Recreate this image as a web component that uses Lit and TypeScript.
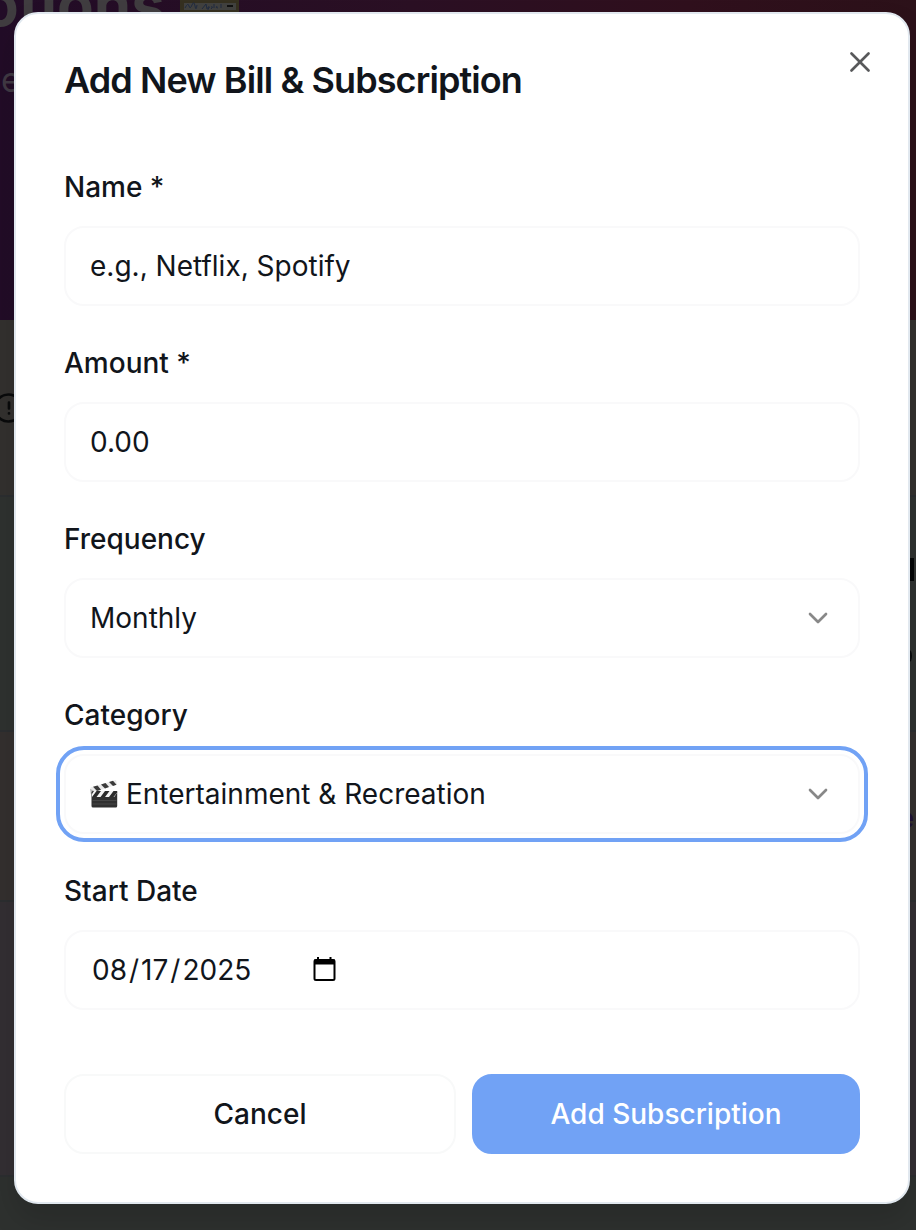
import { LitElement, html, css, svg } from "lit";
import { customElement } from "lit/decorators.js";

const chevron = html`<svg class="chevron" viewBox="0 0 24 24" width="32" height="32">
  ${svg`<path d="m6 9 6 6 6-6" fill="none" stroke="currentColor" stroke-width="2" stroke-linecap="round" stroke-linejoin="round"></path>`}
</svg>`;

const clapper = html`<svg class="clapper" viewBox="0 0 28 28" width="28" height="28">
  <path d="M.5 7.500 26 0l1 4.500L4 12z" fill="#e9e9e9"></path>
  <path d="M3 6.800 7.500 5.400l3.500 4.400-4 1.300zM11 4.400l4.500-1.300 3.500 4-4 1.300zM19 2l4-1.200 3.500 3.900-3.500 1.200z" fill="#3a3a3a"></path>
  <path d="M0 8.500 5 11.500 3 15 .8 14z" fill="#b5b5b5"></path>
  <rect x="1.500" y="11" width="25.700" height="16.500" rx="1.500" fill="#303030"></rect>
  <path d="M4 11h23.200v1.500l-3 4.500H2v-3z" fill="#f4f4f4"></path>
  <path d="M6.500 11H11l-4.500 6H2zM15 11h4.500L15 17h-4.500zM23.500 11h3.700v1.500L23.500 17H19z" fill="#2b2b2b"></path>
  <path d="M2.500 20.500h24M2.500 24h24" stroke="#505050" stroke-width=".7"></path>
</svg>`;

@customElement("app-root")
export class AppRoot extends LitElement {
  static styles = css`
    :host {
      display: block;
      position: relative;
      width: 916px;
      height: 1230px;
      overflow: hidden;
      box-sizing: border-box;
      padding: 12px 6px 26px 14px;
      font-family: Inter, "Liberation Sans", sans-serif;
      color: #11151b;
    }
    * { box-sizing: border-box; }
    .page { position: absolute; inset: 0; display: flex; flex-direction: column; }
    .hero {
      height: 320px;
      background: linear-gradient(90deg, #220c27 0%, #2b1024 45%, #30101d 75%, #2c1119 100%);
    }
    .band { border-bottom: 2px solid #2c2e30; }
    .b1 { height: 177px; background: #33312f; }
    .b2 { height: 235px; background: #2f3230; }
    .b3 { height: 170px; background: #34302f; }
    .b4 { height: 275px; background: #332f33; }
    .b5 { flex: 1; background: #2e312f; border-bottom: 0; }
    .ghost { position: absolute; white-space: nowrap; line-height: 1; }
    .ghost-title { left: -18px; top: -26px; font-size: 60px; font-weight: 700; color: #403d40; }
    .ghost-sub { left: -19px; top: 63px; font-size: 34px; color: #413a44; }
    .ghost-emoji { left: 180px; top: -12px; }
    .ghost-alert { left: -7px; top: 393px; }
    .ghost-bar { left: 910px; top: 558px; width: 4px; height: 23px; background: #030506; }
    .ghost-dot { left: 907px; top: 650px; width: 5px; height: 12px; border-radius: 50%; background: #07090b; }
    .ghost-e { left: 897px; top: 803px; font-size: 29px; font-weight: 600; color: #1f1235; }
    .dialog {
      position: relative;
      height: 1192px;
      padding: 48px;
      border: 2px solid #e1e8ef;
      border-radius: 24px;
      background: #fff;
      box-shadow: 0 16px 30px rgba(0, 0, 0, 0.14);
      display: flex;
      flex-direction: column;
    }
    h1 {
      margin: 0;
      height: 36px;
      font-size: 36px;
      line-height: 36px;
      font-weight: 600;
      letter-spacing: -0.9px;
      white-space: nowrap;
    }
    .close { position: absolute; right: 32px; top: 32px; width: 32px; height: 32px; color: #58595b; }
    .close svg, .chevron, .clapper { display: block; flex: none; }
    .form { margin-top: 68px; display: flex; flex-direction: column; gap: 36px; }
    .field { display: flex; flex-direction: column; gap: 19px; }
    label { height: 41px; font-size: 28px; line-height: 42px; font-weight: 500; }
    .control {
      height: 80px;
      border: 2px solid #f9f9fa;
      border-radius: 20px;
      padding: 0 24px;
      display: flex;
      align-items: center;
      font-size: 28px;
      white-space: nowrap;
    }
    .control .chevron { margin-left: auto; color: #888; }
    .focused { outline: 4px solid #71a2f5; outline-offset: 4px; }
    .clapper { margin-right: 8px; }
    .date { padding-left: 26px; }
    .digits { display: flex; gap: 2px; }
    .calendar { margin-left: 58.5px; display: block; }
    .actions { margin-top: 64px; display: grid; grid-template-columns: 392px 388px; gap: 16px; }
    button {
      height: 80px;
      padding: 0;
      border: 2px solid #f8f9f9;
      border-radius: 20px;
      background: #fff;
      color: #11151b;
      font: 500 28px Inter, sans-serif;
    }
    .primary { background: #71a2f5; border-color: #71a2f5; color: #fff; }
  `;

  render() {
    return html`
      <div class="page">
        <div class="hero"></div>
        <div class="band b1"></div>
        <div class="band b2"></div>
        <div class="band b3"></div>
        <div class="band b4"></div>
        <div class="band b5"></div>
        <span class="ghost ghost-title">otions</span>
        <span class="ghost ghost-sub">ne</span>
        <svg class="ghost ghost-emoji" width="60" height="26" viewBox="0 0 60 26">
          <rect width="59" height="26" fill="#353020"></rect>
          <rect x="4" y="15" width="52" height="7" fill="#41413f"></rect>
          <path d="M5 20q3-6 4-2t3-1 3 1 2-1M22 21l4-5 1 5M28 19v3M28 19q3-1 0 2M31 19q3-1 0 2M34 16v4M37 18q-2 2 1 2M41 16v4" fill="none" stroke="#202b40"></path>
          <path d="M47 18h6" stroke="#111" stroke-width="2"></path>
        </svg>
        <svg class="ghost ghost-alert" width="30" height="30" viewBox="0 0 30 30" fill="none" stroke="#090a0b" stroke-width="2.700" stroke-linecap="round">
          <circle cx="15.500" cy="15" r="13.500"></circle>
          <path d="M16 9.500v6M16 20.300v.1"></path>
        </svg>
        <span class="ghost ghost-bar"></span>
        <span class="ghost ghost-dot"></span>
        <span class="ghost ghost-e">e</span>
      </div>
      <section class="dialog" role="dialog">
        <h1>Add New Bill &amp; Subscription</h1>
        <div class="close">
          <svg width="32" height="32" viewBox="0 0 24 24" fill="none" stroke="currentColor" stroke-width="2" stroke-linecap="round">
            <path d="M18.400 5.600 5.600 18.400M5.600 5.600l12.800 12.800"></path>
          </svg>
        </div>
        <div class="form">
          <div class="field"><label>Name *</label><div class="control">e.g., Netflix, Spotify</div></div>
          <div class="field"><label>Amount *</label><div class="control">0.00</div></div>
          <div class="field"><label>Frequency</label><div class="control">Monthly${chevron}</div></div>
          <div class="field">
            <label>Category</label>
            <div class="control focused">${clapper}<span>Entertainment &amp; Recreation</span>${chevron}</div>
          </div>
          <div class="field">
            <label>Start Date</label>
            <div class="control date">
              <span class="digits"><span>08</span><span>/</span><span>17</span><span>/</span><span>2025</span></span>
              <svg class="calendar" width="32" height="32" viewBox="0 0 32 32">
                <path d="M8 3v4M20.500 3v4" stroke="#000" stroke-width="2"></path>
                <rect x="4.500" y="6" width="20" height="20" rx="1.500" fill="none" stroke="#000" stroke-width="2"></rect>
                <path d="M4 5.500h21v5H4z"></path>
              </svg>
            </div>
          </div>
        </div>
        <div class="actions">
          <button>Cancel</button>
          <button class="primary">Add Subscription</button>
        </div>
      </section>
    `;
  }
}
